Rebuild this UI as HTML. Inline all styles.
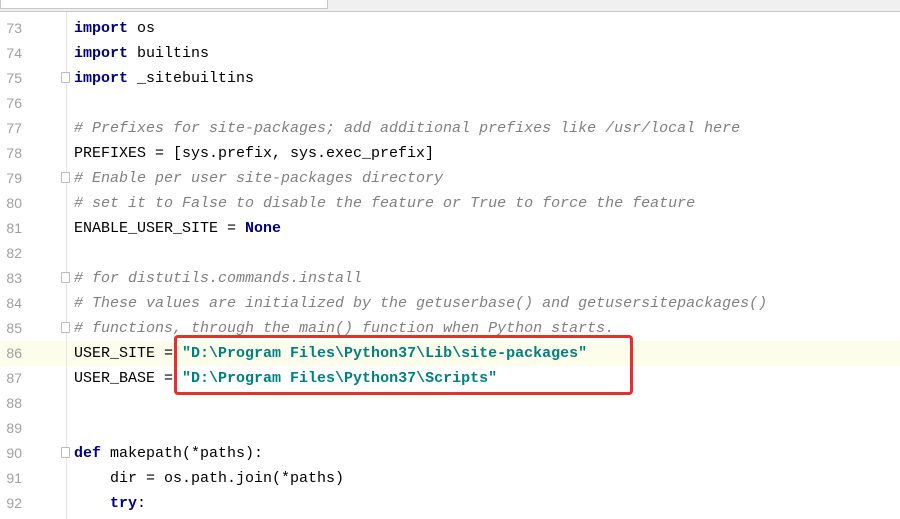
<!DOCTYPE html>
<html><head><style>
body{margin:0;width:900px;height:519px;overflow:hidden;background:#fff;position:relative;font-family:"Liberation Mono",monospace;}
.tb{position:absolute;left:0;top:0;width:900px;height:11px;background:#f0f0f0;border-bottom:1px solid #c9c9c9;}
.inp{position:absolute;left:0;top:0;width:326px;height:8px;background:#fff;border:1px solid #c8c8c8;border-top:none;}
.gut{position:absolute;left:0;top:12px;width:66px;height:507px;border-right:1px solid #e6e6e6;}
.ln{position:absolute;left:0;width:22px;text-align:right;color:#a0a0a0;font-family:"Liberation Sans",sans-serif;font-size:14px;}
.code{position:absolute;left:74px;font-size:15px;color:#000;white-space:pre;}
.row{position:absolute;height:25px;line-height:25px;}
.k{color:#000080;font-weight:bold}
.c{color:#808080;font-style:italic}
.s{color:#008080;font-weight:bold}
.hl{position:absolute;left:0;width:900px;height:25px;background:#fdfdec;}
.fold{position:absolute;left:61px;width:7px;height:9px;border:1px solid #bbb;background:#fff;border-radius:1px;}
.box{position:absolute;left:174px;top:335px;width:453px;height:54px;border:3px solid #e8302a;border-radius:4px;}
</style></head><body>
<div class="tb"><div class="inp"></div></div>
<div class="hl" style="top:341px"></div>
<div class="gut"></div>
<div class="row ln" style="top:16px">73</div>
<div class="row ln" style="top:41px">74</div>
<div class="row ln" style="top:66px">75</div>
<div class="row ln" style="top:91px">76</div>
<div class="row ln" style="top:116px">77</div>
<div class="row ln" style="top:141px">78</div>
<div class="row ln" style="top:166px">79</div>
<div class="row ln" style="top:191px">80</div>
<div class="row ln" style="top:216px">81</div>
<div class="row ln" style="top:241px">82</div>
<div class="row ln" style="top:266px">83</div>
<div class="row ln" style="top:291px">84</div>
<div class="row ln" style="top:316px">85</div>
<div class="row ln" style="top:341px">86</div>
<div class="row ln" style="top:366px">87</div>
<div class="row ln" style="top:391px">88</div>
<div class="row ln" style="top:416px">89</div>
<div class="row ln" style="top:441px">90</div>
<div class="row ln" style="top:466px">91</div>
<div class="row ln" style="top:491px">92</div>
<div class="fold" style="top:72px"></div>
<div class="fold" style="top:172px"></div>
<div class="fold" style="top:272px"></div>
<div class="fold" style="top:322px"></div>
<div class="fold" style="top:447px"></div>
<div class="code row" style="top:16px"><span class="k">import</span> os</div>
<div class="code row" style="top:41px"><span class="k">import</span> builtins</div>
<div class="code row" style="top:66px"><span class="k">import</span> _sitebuiltins</div>
<div class="code row c" style="top:116px"># Prefixes for site-packages; add additional prefixes like /usr/local here</div>
<div class="code row" style="top:141px">PREFIXES = [sys.prefix, sys.exec_prefix]</div>
<div class="code row c" style="top:166px"># Enable per user site-packages directory</div>
<div class="code row c" style="top:191px"># set it to False to disable the feature or True to force the feature</div>
<div class="code row" style="top:216px">ENABLE_USER_SITE = <span class="k">None</span></div>
<div class="code row c" style="top:266px"># for distutils.commands.install</div>
<div class="code row c" style="top:291px"># These values are initialized by the getuserbase() and getusersitepackages()</div>
<div class="code row c" style="top:316px"># functions, through the main() function when Python starts.</div>
<div class="code row" style="top:341px">USER_SITE = <span class="s">"D:\Program Files\Python37\Lib\site-packages"</span></div>
<div class="code row" style="top:366px">USER_BASE = <span class="s">"D:\Program Files\Python37\Scripts"</span></div>
<div class="code row" style="top:441px"><span class="k">def</span> makepath(*paths):</div>
<div class="code row" style="top:466px">    dir = os.path.join(*paths)</div>
<div class="code row" style="top:491px">    <span class="k">try</span>:</div>
<div class="box"></div>
</body></html>
